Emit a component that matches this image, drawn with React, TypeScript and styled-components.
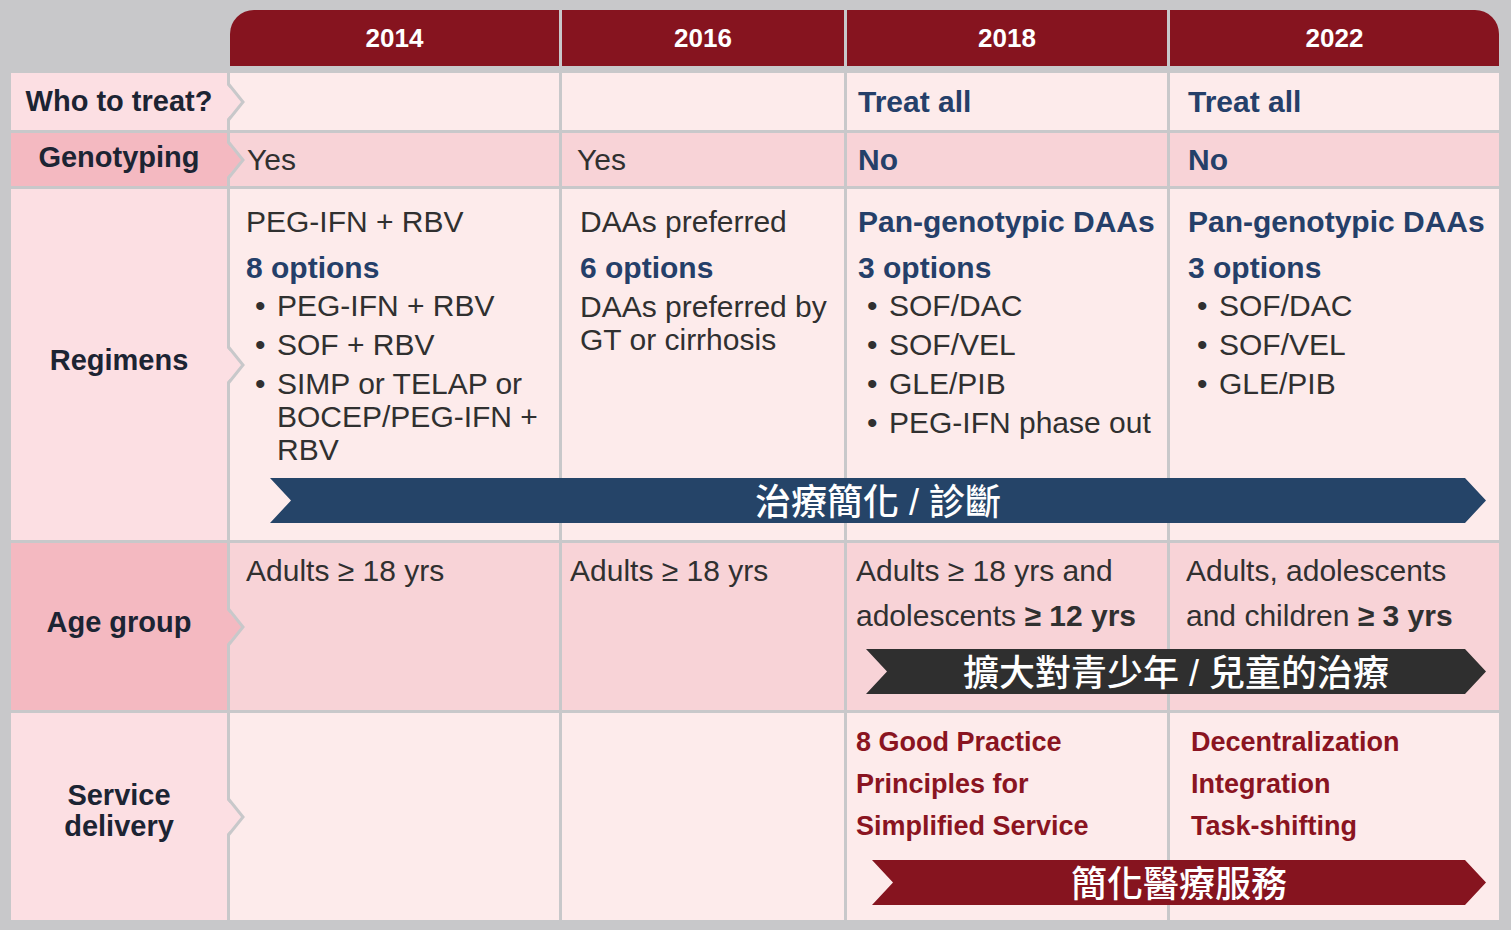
import React from "react";
import styled, { createGlobalStyle } from "styled-components";

const COLS = "216px 329px 282px 320px 329px";
const GRAY = "#c8c8ca";
const RED = "#86141f";
const NAVY = "#254468";
const DARK = "#2f2f2f";
const TEXT = "#303030";
const BLUE = "#253f69";
const LABEL_TEXT = "#1c2433";

type Tone = "light" | "dark";
const LABEL_BG: Record<Tone, string> = { light: "#fcdfe3", dark: "#f4b9c1" };
const CELL_BG: Record<Tone, string> = { light: "#fdebeb", dark: "#f8d3d7" };

const GlobalStyle = createGlobalStyle`
  html, body { margin: 0; padding: 0; background: ${GRAY}; }
  body { font-family: "Liberation Sans", Arial, Helvetica, sans-serif; }
  * { box-sizing: border-box; }
`;

const Page = styled.div`
  width: 1511px;
  height: 930px;
  padding: 10px 12px 10px 11px;
  display: flex;
  flex-direction: column;
  gap: 7px;
  background: ${GRAY};
`;

const HeaderRow = styled.div`
  display: grid;
  grid-template-columns: ${COLS};
  column-gap: 3px;
  height: 56px;
`;

const Year = styled.div<{ $first?: boolean; $last?: boolean }>`
  background: ${RED};
  color: #fff;
  font-weight: 700;
  font-size: 26px;
  display: flex;
  align-items: center;
  justify-content: center;
  border-top-left-radius: ${(p) => (p.$first ? "24px" : "0")};
  border-top-right-radius: ${(p) => (p.$last ? "24px" : "0")};
`;

const Body = styled.div`
  display: flex;
  flex-direction: column;
  gap: 3px;
`;

const Row = styled.div<{ $h: number }>`
  display: grid;
  grid-template-columns: ${COLS};
  grid-template-rows: ${(p) => p.$h}px;
  column-gap: 3px;
`;

const Label = styled.div<{ $tone: Tone; $pb?: number }>`
  grid-row: 1;
  grid-column: 1;
  position: relative;
  background: ${(p) => LABEL_BG[p.$tone]};
  color: ${LABEL_TEXT};
  font-weight: 700;
  font-size: 29px;
  line-height: 31px;
  text-align: center;
  display: flex;
  align-items: center;
  justify-content: center;
  padding-bottom: ${(p) => p.$pb ?? 6}px;
`;

const ChevronSvg = styled.svg`
  position: absolute;
  left: 100%;
  top: 50%;
  transform: translateY(-50%);
  overflow: visible;
  z-index: 2;
`;

const Chevron = ({ tone }: { tone: Tone }) => (
  <ChevronSvg width="20" height="34" viewBox="0 0 20 34">
    <polygon points="0,0 15.5,17 0,34" fill={LABEL_BG[tone]} />
    <polyline points="1.5,-1 16,17 1.5,35" fill="none" stroke={GRAY} strokeWidth="3" />
  </ChevronSvg>
);

const Cell = styled.div<{ $tone: Tone; $col: number; $pl?: number; $pt?: number; $center?: boolean }>`
  grid-row: 1;
  grid-column: ${(p) => p.$col};
  background: ${(p) => CELL_BG[p.$tone]};
  padding-left: ${(p) => p.$pl ?? 16}px;
  padding-top: ${(p) => p.$pt ?? 0}px;
  padding-right: 8px;
  display: flex;
  flex-direction: column;
  justify-content: ${(p) => (p.$center ? "center" : "flex-start")};
`;

const Line = styled.div<{ $blue?: boolean; $mb?: number }>`
  font-size: 30px;
  line-height: 33px;
  font-weight: ${(p) => (p.$blue ? 700 : 400)};
  color: ${(p) => (p.$blue ? BLUE : TEXT)};
  margin-bottom: ${(p) => p.$mb ?? 0}px;
  white-space: nowrap;
`;

const List = styled.ul`
  list-style: none;
  margin: 0;
  padding: 0;
`;

const Item = styled.li`
  display: flex;
  font-size: 30px;
  line-height: 33px;
  color: ${TEXT};
  margin-bottom: 6px;
  white-space: nowrap;
`;

const Dot = styled.span`
  flex: 0 0 31px;
  padding-left: 9px;
`;

const AgeText = styled.div`
  font-size: 30px;
  line-height: 45px;
  color: ${TEXT};
  white-space: nowrap;
  b { font-weight: 700; }
`;

const RedText = styled.div`
  font-size: 27px;
  line-height: 42px;
  font-weight: 700;
  color: #8a1421;
  white-space: nowrap;
`;

const Banner = styled.div<{ $from: number; $bg: string; $ml: number; $mb: number }>`
  grid-row: 1;
  grid-column: ${(p) => p.$from} / -1;
  align-self: end;
  z-index: 1;
  height: 45px;
  margin: 0 13px ${(p) => p.$mb}px ${(p) => p.$ml}px;
  padding-bottom: 4px;
  background: ${(p) => p.$bg};
  clip-path: polygon(0 0, calc(100% - 21px) 0, 100% 50%, calc(100% - 21px) 100%, 0 100%, 21px 50%);
  color: #fff;
  font-family: "Liberation Sans", "Noto Sans CJK TC", sans-serif;
  font-size: 36px;
  font-weight: 500;
  display: flex;
  align-items: center;
  justify-content: center;
  white-space: nowrap;
`;

const Bullets = ({ items }: { items: React.ReactNode[] }) => (
  <List>
    {items.map((it, i) => (
      <Item key={i}>
        <Dot>•</Dot>
        <span>{it}</span>
      </Item>
    ))}
  </List>
);

export default function App() {
  return (
    <>
      <GlobalStyle />
      <Page>
        <HeaderRow>
          <div />
          <Year $first>2014</Year>
          <Year>2016</Year>
          <Year>2018</Year>
          <Year $last>2022</Year>
        </HeaderRow>

        <Body>
          <Row $h={57}>
            <Label $tone="light" $pb={0}>
              Who to treat?
              <Chevron tone="light" />
            </Label>
            <Cell $tone="light" $col={2} />
            <Cell $tone="light" $col={3} />
            <Cell $tone="light" $col={4} $pl={11} $center>
              <Line $blue>Treat all</Line>
            </Cell>
            <Cell $tone="light" $col={5} $pl={18} $center>
              <Line $blue>Treat all</Line>
            </Cell>
          </Row>

          <Row $h={53}>
            <Label $tone="dark" $pb={4}>
              Genotyping
              <Chevron tone="dark" />
            </Label>
            <Cell $tone="dark" $col={2} $pl={17} $center>
              <Line>Yes</Line>
            </Cell>
            <Cell $tone="dark" $col={3} $pl={15} $center>
              <Line>Yes</Line>
            </Cell>
            <Cell $tone="dark" $col={4} $pl={11} $center>
              <Line $blue>No</Line>
            </Cell>
            <Cell $tone="dark" $col={5} $pl={18} $center>
              <Line $blue>No</Line>
            </Cell>
          </Row>

          <Row $h={351}>
            <Label $tone="light" $pb={8}>
              Regimens
              <Chevron tone="light" />
            </Label>
            <Cell $tone="light" $col={2} $pl={16} $pt={16}>
              <Line $mb={13}>PEG-IFN + RBV</Line>
              <Line $blue $mb={5}>8 options</Line>
              <Bullets
                items={[
                  "PEG-IFN + RBV",
                  "SOF + RBV",
                  <>
                    SIMP or TELAP or
                    <br />
                    BOCEP/PEG-IFN +
                    <br />
                    RBV
                  </>,
                ]}
              />
            </Cell>
            <Cell $tone="light" $col={3} $pl={18} $pt={16}>
              <Line $mb={13}>DAAs preferred</Line>
              <Line $blue $mb={6}>6 options</Line>
              <Line>DAAs preferred by</Line>
              <Line>GT or cirrhosis</Line>
            </Cell>
            <Cell $tone="light" $col={4} $pl={11} $pt={16}>
              <Line $blue $mb={13}>Pan-genotypic DAAs</Line>
              <Line $blue $mb={5}>3 options</Line>
              <Bullets items={["SOF/DAC", "SOF/VEL", "GLE/PIB", "PEG-IFN phase out"]} />
            </Cell>
            <Cell $tone="light" $col={5} $pl={18} $pt={16}>
              <Line $blue $mb={13}>Pan-genotypic DAAs</Line>
              <Line $blue $mb={5}>3 options</Line>
              <Bullets items={["SOF/DAC", "SOF/VEL", "GLE/PIB"]} />
            </Cell>
            <Banner $from={2} $bg={NAVY} $ml={40} $mb={17}>
              治療簡化 / 診斷
            </Banner>
          </Row>

          <Row $h={167}>
            <Label $tone="dark" $pb={8}>
              Age group
              <Chevron tone="dark" />
            </Label>
            <Cell $tone="dark" $col={2} $pl={16} $pt={5}>
              <AgeText>Adults ≥ 18 yrs</AgeText>
            </Cell>
            <Cell $tone="dark" $col={3} $pl={8} $pt={5}>
              <AgeText>Adults ≥ 18 yrs</AgeText>
            </Cell>
            <Cell $tone="dark" $col={4} $pl={9} $pt={5}>
              <AgeText>Adults ≥ 18 yrs and</AgeText>
              <AgeText>
                adolescents <b>≥ 12 yrs</b>
              </AgeText>
            </Cell>
            <Cell $tone="dark" $col={5} $pl={16} $pt={5}>
              <AgeText>Adults, adolescents</AgeText>
              <AgeText>
                and children <b>≥ 3 yrs</b>
              </AgeText>
            </Cell>
            <Banner $from={4} $bg={DARK} $ml={19} $mb={16}>
              擴大對青少年 / 兒童的治療
            </Banner>
          </Row>

          <Row $h={207}>
            <Label $tone="light" $pb={12}>
              Service
              <br />
              delivery
              <Chevron tone="light" />
            </Label>
            <Cell $tone="light" $col={2} />
            <Cell $tone="light" $col={3} />
            <Cell $tone="light" $col={4} $pl={9} $pt={8}>
              <RedText>8 Good Practice</RedText>
              <RedText>Principles for</RedText>
              <RedText>Simplified Service</RedText>
            </Cell>
            <Cell $tone="light" $col={5} $pl={21} $pt={8}>
              <RedText>Decentralization</RedText>
              <RedText>Integration</RedText>
              <RedText>Task-shifting</RedText>
            </Cell>
            <Banner $from={4} $bg={RED} $ml={25} $mb={15}>
              簡化醫療服務
            </Banner>
          </Row>
        </Body>
      </Page>
    </>
  );
}
